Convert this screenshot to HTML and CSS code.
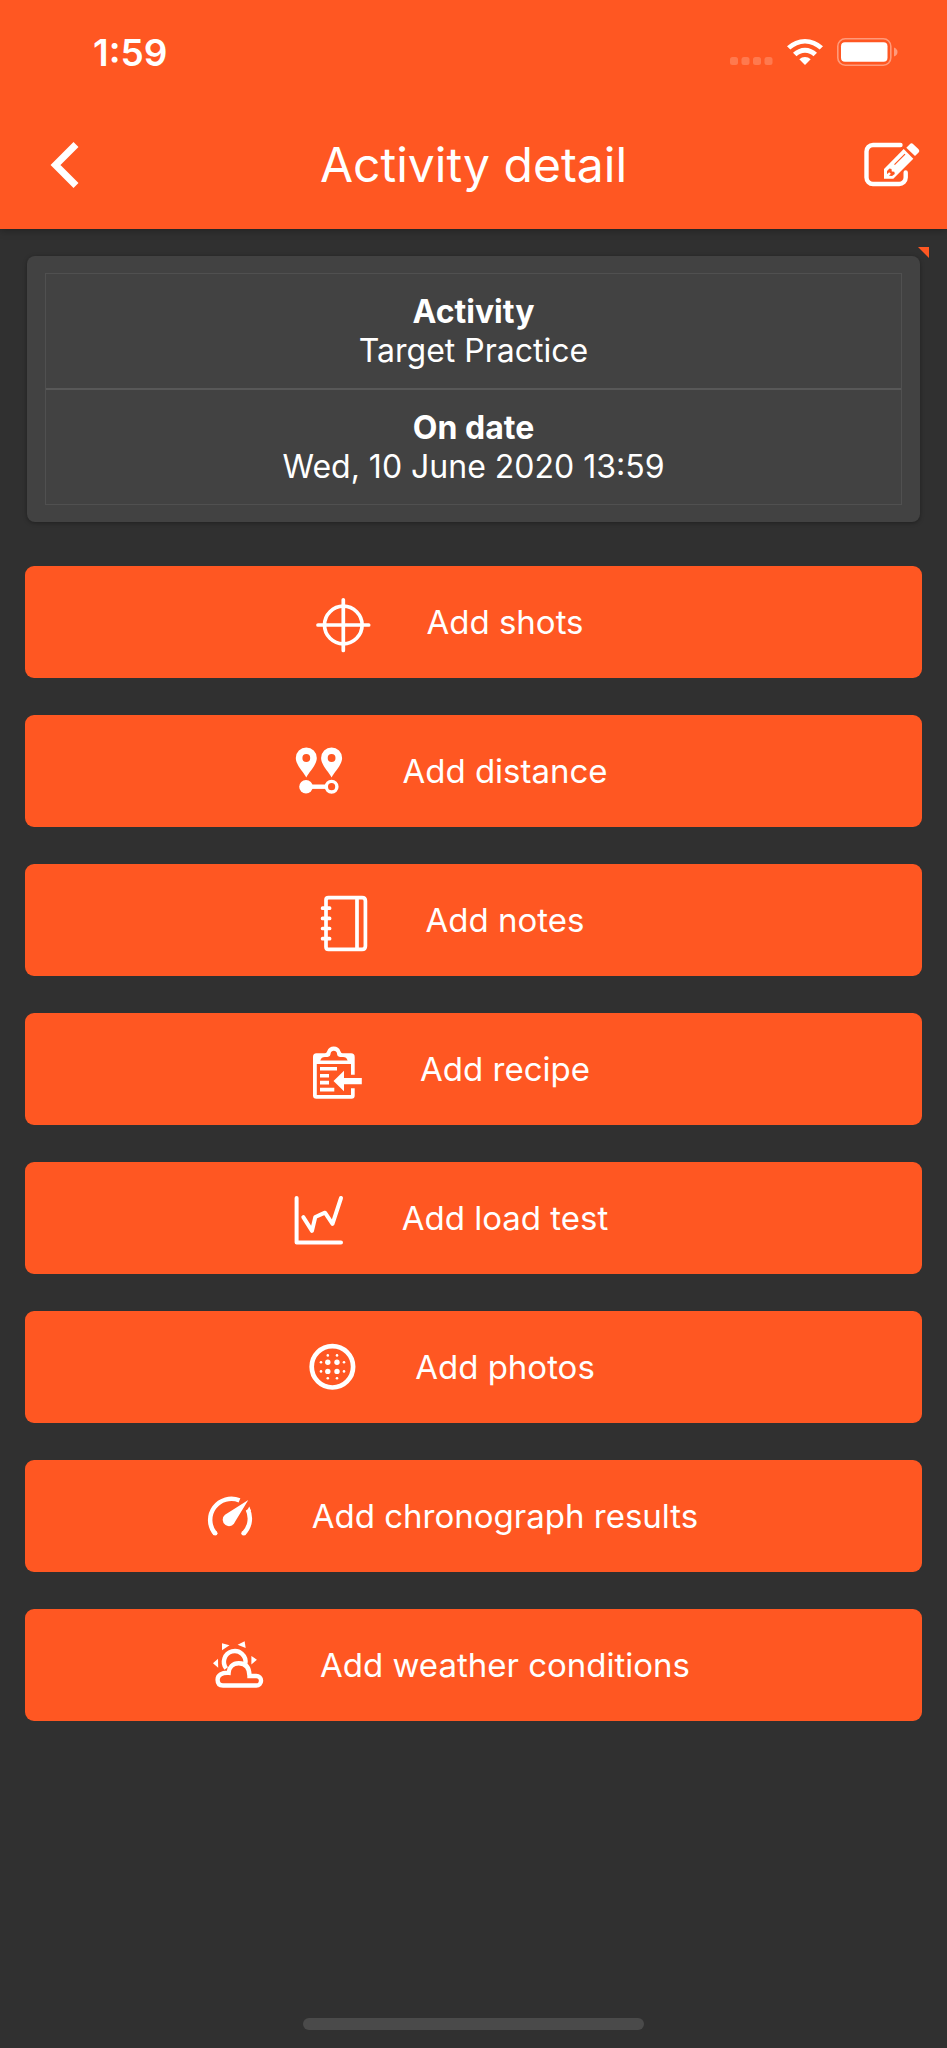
FILE: index.html
```html
<!DOCTYPE html>
<html lang="en">
<head>
    <meta charset="UTF-8">
    <meta name="viewport" content="width=device-width, initial-scale=1.0">
    <title>Activity detail</title>
    <link rel="stylesheet" href="styles.css">
</head>
<body>
    <header class="header">
        <div class="status-bar">
            <span class="time">1:59</span>
            <div class="status-icons">
                <svg width="43" height="28" viewBox="0 0 43 28" fill="#fff" opacity="0.2">
                    <rect x="0" y="19" width="8" height="8" rx="2.5" />
                    <rect x="11.5" y="19" width="8" height="8" rx="2.5" />
                    <rect x="23" y="19" width="8" height="8" rx="2.5" />
                    <rect x="34.5" y="19" width="8" height="8" rx="2.5" />
                </svg>
                <svg width="36" height="28" viewBox="0 0 36 28" fill="#fff">
                    <path d="M0 8.3 A26 26 0 0 1 36 8.3 L32.7 11.6 A21 21 0 0 0 3.3 11.6 Z" />
                    <path d="M6 14.8 A17 17 0 0 1 30 14.8 L26.5 18.2 A12 12 0 0 0 9.5 18.2 Z" />
                    <path d="M12.3 21.2 A8.5 8.5 0 0 1 23.7 21.2 L18 27 Z" />
                </svg>
                <svg width="61" height="28" viewBox="0 0 61 28">
                    <rect x="0.8" y="0.8" width="53" height="26.4" rx="7.5" fill="none" stroke="#fff" stroke-width="1.6" opacity="0.4" />
                    <rect x="4" y="4.3" width="46.5" height="19.4" rx="4" fill="#fff" />
                    <path d="M57 9.5 Q60.5 11 60.5 14 T57 18.5 Z" fill="#fff" opacity="0.4" />
                </svg>
            </div>
        </div>
        <div class="nav-bar">
            <button class="icon-button" type="button" aria-label="Back">
                <svg width="30" height="48" viewBox="0 0 30 48">
                    <path d="M26 3.5 L5.5 24 L26 44.5" fill="none" stroke="#fff" stroke-width="7" />
                </svg>
            </button>
            <h1 class="title">Activity detail</h1>
            <button class="icon-button" type="button" aria-label="Edit">
                <svg width="60" height="48" viewBox="0 0 60 48">
                    <path d="M38.5 4 H11 A6.5 6.5 0 0 0 4.5 10.5 V36.5 A6.5 6.5 0 0 0 11 43 H37 A6.5 6.5 0 0 0 43.7 36.5 V31.5" fill="none" stroke="#fff" stroke-width="4.4" stroke-linecap="round" />
                    <path d="M41.7 8 L51.3 17.7 L31.3 37.7 H22 V28 Z" fill="#fff" />
                    <path d="M44.3 6.7 L47.8 3.2 Q49.5 1.5 51.3 3.2 L56.6 8.2 Q58.2 9.9 56.6 11.6 L53 15 Z" fill="#fff" />
                    <path d="M32.5 23.7 L43 13.2" stroke="#ff5722" stroke-width="1.2" />
                    <path d="M27.5 27.5 L29.5 28 L29.8 30.5 L32.3 30.8 L32.8 33 L30 35 L27.5 34.7 L25 32.5 L25 30 Z" fill="#ff5722" />
                    <path d="M25.5 34.5 L28 32" stroke="#fff" stroke-width="2.4" />
                </svg>
            </button>
        </div>
    </header>

    <main class="content">
        <section class="card">
            <span class="corner"></span>
            <dl class="details">
                <div class="detail">
                    <dt>Activity</dt>
                    <dd>Target Practice</dd>
                </div>
                <div class="detail">
                    <dt>On date</dt>
                    <dd>Wed, 10 June 2020 13:59</dd>
                </div>
            </dl>
        </section>

        <div class="actions">
            <button class="action" type="button">
                <svg class="icon" viewBox="0 0 64 64">
                    <g fill="none" stroke="#fff" stroke-width="3.7" stroke-linecap="round">
                        <circle cx="29.3" cy="35" r="18.8" />
                        <path d="M29.3 9.8 V60.5 M4 35 H54.7" />
                    </g>
                </svg>
                Add shots
            </button>
            <button class="action" type="button">
                <svg class="icon" viewBox="0 0 64 64">
                    <path fill="#fff" fill-rule="evenodd" d="M16.3 38.5 C13.5 33 5.8 26 5.8 19 A10.5 10.5 0 0 1 26.8 19 C26.8 26 19 33 16.3 38.5 Z M16.3 15.1 A3.9 3.9 0 1 0 16.3 22.9 A3.9 3.9 0 1 0 16.3 15.1 Z" />
                    <path fill="#fff" fill-rule="evenodd" d="M41.6 38.5 C38.8 33 31.1 26 31.1 19 A10.5 10.5 0 0 1 52.1 19 C52.1 26 44.3 33 41.6 38.5 Z M41.6 15.1 A3.9 3.9 0 1 0 41.6 22.9 A3.9 3.9 0 1 0 41.6 15.1 Z" />
                    <circle cx="16" cy="47.7" r="6.8" fill="#fff" />
                    <path d="M16 47.7 H36" stroke="#fff" stroke-width="4.4" />
                    <circle cx="41.6" cy="47.7" r="5.3" fill="none" stroke="#fff" stroke-width="3.4" />
                </svg>
                Add distance
            </button>
            <button class="action" type="button">
                <svg class="icon" viewBox="0 0 64 64">
                    <g fill="none" stroke="#fff" stroke-width="3.7" stroke-linecap="round">
                        <path d="M14.5 9.7 H48 Q51.4 9.7 51.4 13 V58 Q51.4 61.4 48 61.4 H14.5 Q12 61.4 12 59 V12 Q12 9.7 14.5 9.7 Z" />
                        <path d="M43 10 V61" />
                        <path d="M8.6 20.2 H15.6 M8.6 30.4 H15.6 M8.6 40.5 H15.6 M8.6 50.7 H15.6" />
                    </g>
                </svg>
                Add notes
            </button>
            <button class="action" type="button">
                <svg class="icon" viewBox="0 0 64 64">
                    <path fill="#fff" fill-rule="evenodd" d="M8.5 16.3 H17 Q18.5 16.3 19.3 14 Q20.8 9.5 25.8 9.5 T32.3 14 Q33 16.3 34.5 16.3 H43 Q46.7 16.3 46.7 20 V37.7 H43 V27 H8.8 V58 H43 V51.3 H46.7 V58.5 Q46.7 61.7 43.5 61.7 H8.5 Q5 61.7 5 58.5 V20 Q5 16.3 8.5 16.3 Z M12.3 23.4 H39.6 Q38.6 20 35 20 H32 Q29 19.5 29 16.5 Q28.5 13.7 25.8 13.7 T22.6 16.5 Q22.5 19.5 19.5 20 H17 Q13.3 20 12.3 23.4 Z" />
                    <path d="M12 31.8 H29 M12 38.7 H21 M12 45.6 H21 M12 52.6 H26.3" stroke="#fff" stroke-width="3.6" />
                    <path d="M25.5 44 L36 33.7 V41 H53.8 V47.2 H36 V54.3 Z" fill="#fff" />
                </svg>
                Add recipe
            </button>
            <button class="action" type="button">
                <svg class="icon" viewBox="0 0 64 64">
                    <g fill="none" stroke="#fff" stroke-width="4" stroke-linecap="round" stroke-linejoin="round">
                        <path d="M6.6 12 V56.6 H51" />
                        <path d="M13.3 31.2 L22 44.8 L25.3 31 L35 26.7 L42.5 37.8 L51 12" />
                    </g>
                </svg>
                Add load test
            </button>
            <button class="action" type="button">
                <svg class="icon" viewBox="0 0 64 64">
                    <circle cx="29.4" cy="31.8" r="20.7" fill="none" stroke="#fff" stroke-width="4.7" />
                    <g fill="#fff">
                        <circle cx="24.8" cy="27.3" r="2.7" />
                        <circle cx="34" cy="27.3" r="2.7" />
                        <circle cx="24.8" cy="36.4" r="2.7" />
                        <circle cx="34" cy="36.4" r="2.7" />
                        <circle cx="24.8" cy="20.4" r="1.3" />
                        <circle cx="34" cy="20.4" r="1.3" />
                        <circle cx="24.8" cy="43.3" r="1.3" />
                        <circle cx="34" cy="43.3" r="1.3" />
                        <circle cx="18" cy="27.3" r="1.3" />
                        <circle cx="18" cy="36.4" r="1.3" />
                        <circle cx="41" cy="27.3" r="1.3" />
                        <circle cx="41" cy="36.4" r="1.3" />
                    </g>
                </svg>
                Add photos
            </button>
            <button class="action" type="button">
                <svg class="icon" viewBox="0 0 64 64">
                    <path d="M15.3 49.8 A21.2 21.2 0 0 1 39.5 16.4" fill="none" stroke="#fff" stroke-width="4.5" />
                    <path d="M47.8 25.5 A21.2 21.2 0 0 1 43.4 49.8" fill="none" stroke="#fff" stroke-width="4.5" />
                    <circle cx="15.2" cy="49.2" r="2.3" fill="#fff" />
                    <circle cx="43.6" cy="49.2" r="2.3" fill="#fff" />
                    <path d="M46.5 27.5 L49.3 22.5 L51 27 Z" fill="#fff" />
                    <path d="M48.3 16 L35.2 37.6 A6.4 6.4 0 1 1 25 30.8 Z" fill="#fff" />
                </svg>
                Add chronograph results
            </button>
            <button class="action" type="button">
                <svg class="icon" viewBox="0 0 64 64">
                    <g fill="none" stroke="#fff" stroke-width="4.4">
                        <path d="M18.2 35.5 A10.8 10.8 0 1 1 37.4 30.5" />
                        <path d="M15 52.5 H48.3 A4.7 4.7 0 0 0 48.3 43 H41.5 C41.5 35 38 30.2 30.8 30.2 C24.5 30.2 21 34.5 20.6 39.8 C14 39.3 9.6 42.3 9.6 46.8 Q9.6 52.5 15 52.5 Z" />
                    </g>
                    <g fill="#fff">
                        <path d="M14 10.3 L21.5 12.3 L14 17.3 Z" />
                        <path d="M36.6 8.3 L29.6 11.7 L37.7 15 Z" />
                        <path d="M5 30.3 L10 25.7 L10.2 34.7 Z" />
                        <path d="M43.4 23 L48.9 26.7 L43.4 31.5 Z" />
                    </g>
                </svg>
                Add weather conditions
            </button>
        </div>
    </main>

    <div class="home-indicator"></div>
</body>
</html>
```
FILE: styles.css
```css
* {
    box-sizing: border-box;
}
body {
    margin: 0;
    min-height: 100vh;
    display: flex;
    flex-direction: column;
    background-color: #303030;
    color: #fff;
    font-family: Inter, sans-serif;
    font-size: 32px;
}
button {
    border: none;
    padding: 0;
    background: none;
    color: inherit;
    font: inherit;
    cursor: pointer;
}
svg {
    display: block;
}
.header {
    background-color: #ff5722;
    box-shadow: 0 1px 8px rgba(0, 0, 0, 0.35);
}
.status-bar {
    display: flex;
    justify-content: space-between;
    align-items: center;
    height: 104px;
    padding: 0 49px 0 93px;
}
.time {
    font-size: 37px;
    font-weight: 600;
}
.status-icons {
    display: flex;
    gap: 14px;
}
.nav-bar {
    display: flex;
    justify-content: space-between;
    align-items: center;
    height: 125px;
    padding: 0 25px 4px;
}
.icon-button {
    display: flex;
    justify-content: flex-end;
    width: 60px;
}
.icon-button:first-child {
    padding-right: 5px;
}
.title {
    margin: 0;
    font-size: 48px;
    font-weight: 400;
    line-height: 60px;
}
.content {
    padding: 27px 25px;
}
.card {
    position: relative;
    margin: 0 2px;
    padding: 17px 18px;
    border-radius: 8px;
    background-color: #424242;
    box-shadow: 0 1px 4px rgba(0, 0, 0, 0.35);
}
.corner {
    position: absolute;
    top: -9px;
    right: -9px;
    border-top: 11px solid #ff5722;
    border-left: 11px solid transparent;
}
.details {
    margin: 0;
    border: 1px solid #505050;
}
.detail {
    padding: 18px 0;
    line-height: 39px;
    text-align: center;
}
.detail + .detail {
    border-top: 2px solid #585858;
}
.detail dt {
    font-weight: 700;
}
.detail dd {
    margin: 0;
}
.actions {
    display: grid;
    gap: 37px;
    margin-top: 44px;
}
.action {
    display: flex;
    justify-content: center;
    align-items: center;
    height: 112px;
    padding-right: 49px;
    border-radius: 9px;
    background-color: #ff5722;
    font-size: 33px;
}
.icon {
    width: 64px;
    height: 64px;
    margin-right: 48px;
}
.home-indicator {
    width: 36%;
    height: 12px;
    margin: auto auto 18px;
    border-radius: 6px;
    background-color: #4a4a4a;
}
```
